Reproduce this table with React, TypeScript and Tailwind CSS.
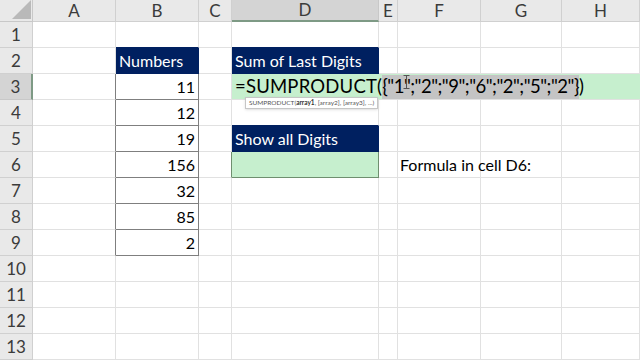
import React from 'react'

const cols = ['A', 'B', 'C', 'D', 'E', 'F', 'G', 'H']
const rows = [1, 2, 3, 4, 5, 6, 7, 8, 9, 10, 11, 12, 13]
const numbers: Record<number, string> = { 3: '11', 4: '12', 5: '19', 6: '156', 7: '32', 8: '85', 9: '2' }

const font = { fontFamily: 'Lato, "Liberation Sans", sans-serif' }

function cellClass(col: string, row: number) {
  // default gridline
  let cls = 'relative border-r border-b border-[#e1e1e1] bg-white'
  if (col === 'B' && row === 2) cls = 'relative border-r border-b border-[#002060] bg-[#002060]'
  else if (col === 'B' && row >= 3 && row <= 9) cls = 'relative border-r border-b border-[#7f7f7f] bg-white'
  else if (col === 'A' && row >= 3 && row <= 9) cls = 'relative border-r border-b border-r-[#7f7f7f] border-b-[#e1e1e1] bg-white'
  else if (col === 'B' && row === 1) cls = 'relative border-r border-b border-r-[#e1e1e1] border-b-[#002060] bg-white'
  else if (col === 'D' && (row === 2 || row === 5)) cls = 'relative border-r border-b border-[#002060] bg-[#002060]'
  else if (col === 'D' && (row === 1 || row === 4)) cls = 'relative border-r border-b border-r-[#e1e1e1] border-b-[#002060] bg-white'
  else if (col === 'D' && row === 6) cls = 'relative border-r border-b border-[#6f8f6f] bg-[#c6efce]'
  else if (col === 'C' && row === 6) cls = 'relative border-r border-b border-r-[#6f8f6f] border-b-[#e1e1e1] bg-white'
  return cls
}

function CellContent({ col, row }: { col: string; row: number }) {
  if (col === 'B' && row === 2) return <span className="pl-[3px] text-[16px] text-white">Numbers</span>
  if (col === 'B' && numbers[row]) return <span className="ml-auto pr-[3px] text-[16px] text-black">{numbers[row]}</span>
  if (col === 'D' && row === 2) return <span className="pl-[3px] text-[16px] text-white">Sum of Last Digits</span>
  if (col === 'D' && row === 5) return <span className="pl-[3px] text-[16px] text-white">Show all Digits</span>
  if (col === 'F' && row === 6)
    return <span className="relative z-10 pl-[2px] text-[16px] whitespace-nowrap text-black">Formula in cell D6:</span>
  return null
}

export default function App() {
  return (
    <div className="w-[640px] h-[360px] overflow-hidden bg-white select-none" style={font}>
      <div className="grid grid-cols-[33px_83px_83px_33px_147px_19px_83px_81px_1fr] grid-rows-[22px_repeat(13,26px)]">
        {/* corner */}
        <div className="relative border-r border-b border-[#c8c8c8] bg-[#e9e9e9]">
          <div
            className="absolute right-[1px] bottom-[2px] w-[19px] h-[19px] bg-[#b9b9b9]"
            style={{ clipPath: 'polygon(100% 0, 100% 100%, 0 100%)' }}
          />
        </div>
        {cols.map((c) => (
          <div
            key={c}
            className={
              c === 'D'
                ? 'flex items-center justify-center border-r border-[#c8c8c8] border-b-2 border-b-[#7e9a85] bg-[#d4d4d4] text-[17px] text-[#3b3b3b]'
                : 'flex items-center justify-center border-r border-b border-[#d0d0d0] bg-[#e9e9e9] text-[17px] text-[#3b3b3b]'
            }
          >
            {c}
          </div>
        ))}

        {rows.map((r) => (
          <React.Fragment key={r}>
            <div
              className={
                r === 3
                  ? 'flex items-center justify-center border-r-2 border-r-[#7e9a85] border-b border-b-[#c8c8c8] bg-[#d4d4d4] text-[17px] text-[#3b3b3b]'
                  : 'flex items-center justify-center border-r border-b border-[#d0d0d0] bg-[#e9e9e9] text-[17px] text-[#3b3b3b]'
              }
            >
              {r}
            </div>
            {r === 3 ? (
              <>
                {['A', 'B', 'C'].map((c) => (
                  <div key={c} className={`flex items-center ${cellClass(c, r)}`}>
                    <CellContent col={c} row={r} />
                  </div>
                ))}
                <div className="relative col-span-5 flex items-center border-b border-[#e1e1e1] bg-[#c6efce]">
                  <div className="flex items-center pl-[3px] text-[18.5px] whitespace-nowrap text-black">
                    <span className="tracking-[0.2px]">=SUMPRODUCT(</span>
                    <span className="bg-[#c4c4c4] h-[24px] flex items-center tracking-[-0.5px]">{'{"1";"2";"9";"6";"2";"5";"2"}'}</span>
                    <span>)</span>
                  </div>
                  {/* mouse I-beam */}
                  <svg className="absolute left-[171px] top-[1px]" width="7" height="14" viewBox="0 0 7 14">
                    <path d="M0.5 0.5h6M0.5 13.5h6M3.5 0.5v13" stroke="#555" strokeWidth="1" fill="none" />
                  </svg>
                  {/* function tooltip */}
                  <div className="absolute left-[13px] top-[23px] z-10 h-[12px] border border-[#c6c6c6] bg-white px-[3px] text-[6.5px] leading-[10px] whitespace-nowrap text-[#555] shadow-sm">
                    SUMPRODUCT(<b className="text-[#333]">array1</b>, [array2], [array3], ...)
                  </div>
                </div>
              </>
            ) : (
              cols.map((c) => (
                <div key={c} className={`flex items-center ${cellClass(c, r)}`}>
                  <CellContent col={c} row={r} />
                </div>
              ))
            )}
          </React.Fragment>
        ))}
      </div>
    </div>
  )
}
